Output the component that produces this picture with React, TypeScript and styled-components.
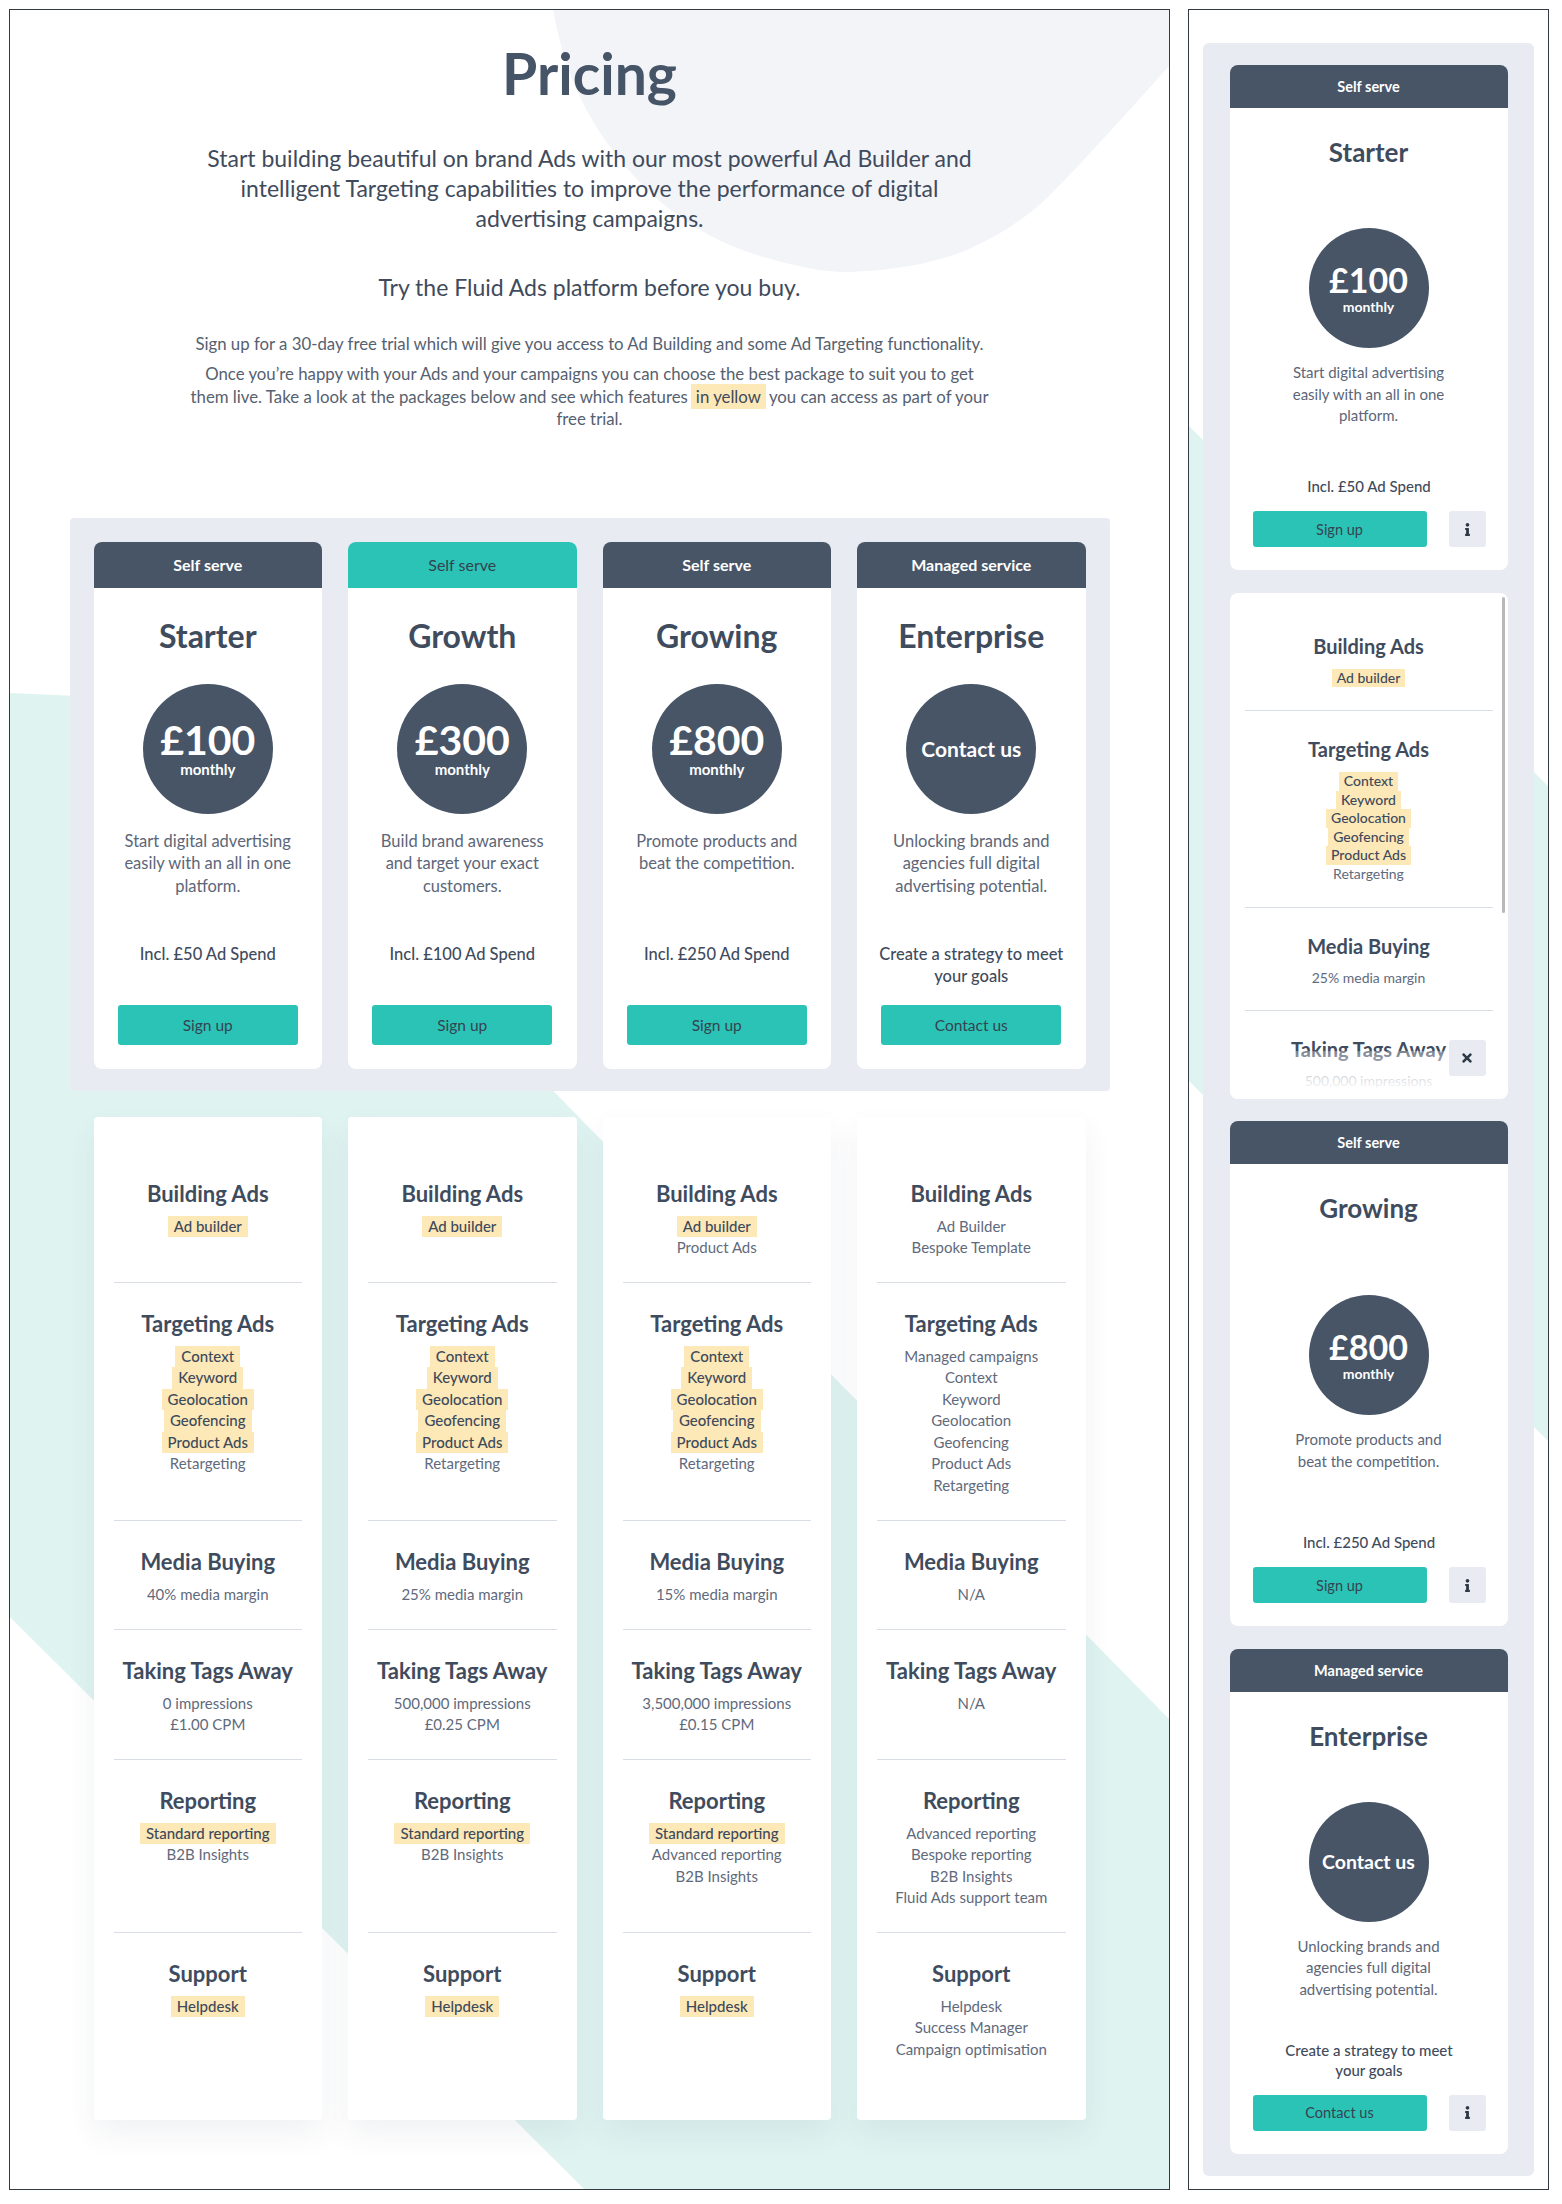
import React from 'react';
import styled, { createGlobalStyle } from 'styled-components';
import { FaInfo, FaTimes } from 'react-icons/fa';

const C = {
  slate: '#475567',
  ink: '#3f4c5e',
  text: '#56616f',
  soft: '#5f6a7c',
  teal: '#2cc3b7',
  panel: '#e8ebf2',
  mint: '#dff4f1',
  blob: '#f3f4f8',
  mark: '#fde8b7',
  rule: '#d9dde8',
};

const GlobalStyle = createGlobalStyle`
  html, body { margin: 0; padding: 0; background: #fff; }
  body { font-family: Lato, "Liberation Sans", Arial, sans-serif; color: ${C.slate}; }
  *, *::before, *::after { box-sizing: border-box; }
`;

const Page = styled.div`
  display: flex;
  align-items: flex-start;
  gap: 18px;
  padding: 9px 0 0 9px;
  width: 1562px;
  height: 2204px;
  overflow: hidden;
`;

const Frame = styled.section<{ $w: number }>`
  position: relative;
  flex: none;
  width: ${(p) => p.$w}px;
  height: 2181px;
  border: 1px solid #343a44;
  overflow: hidden;
  background: #fff;
`;

const Backdrop = styled.svg`
  position: absolute;
  inset: 0;
  width: 100%;
  height: 100%;
  z-index: 0;
`;

const Content = styled.div`
  position: relative;
  z-index: 1;
  display: flex;
  flex-direction: column;
  align-items: center;
`;

const DesktopContent = styled(Content)`
  padding-top: 31px;
`;

const PageTitle = styled.h1`
  margin: 0;
  font-size: 57px;
  line-height: 65px;
  font-weight: 700;
  color: #465467;
`;

const Lead = styled.p<{ $gap: number }>`
  margin: ${(p) => p.$gap}px 0 0;
  font-size: 23px;
  line-height: 30px;
  text-align: center;
  color: #3f4b5c;
`;

const Note = styled.p<{ $gap: number }>`
  margin: ${(p) => p.$gap}px 0 0;
  font-size: 16.8px;
  line-height: 22.5px;
  text-align: center;
  color: ${C.text};
`;

const Yellow = styled.span`
  background: ${C.mark};
  padding: 2px 5px;
  margin: 0 3px;
  color: #3e4a5b;
`;

const PlanGrid = styled.div`
  width: 1040px;
  margin-top: 87px;
  padding: 24px 24px 22px;
  background: ${C.panel};
  border-radius: 4px;
  display: grid;
  grid-template-columns: repeat(4, 1fr);
  column-gap: 26px;
`;

const PlanCard = styled.article<{ $m?: boolean }>`
  background: #fff;
  border-radius: 8px;
  overflow: hidden;
  display: flex;
  flex-direction: column;
  align-items: center;
  ${(p) => (p.$m ? 'width: 278px; height: 505px;' : 'padding-bottom: 24px;')}
`;

const PlanTag = styled.div<{ $accent?: boolean; $m?: boolean }>`
  width: 100%;
  height: ${(p) => (p.$m ? 43 : 46)}px;
  display: flex;
  align-items: center;
  justify-content: center;
  font-size: ${(p) => (p.$m ? 14.5 : 16)}px;
  font-weight: ${(p) => (p.$accent ? 400 : 700)};
  background: ${(p) => (p.$accent ? C.teal : C.slate)};
  color: ${(p) => (p.$accent ? '#33424f' : '#fff')};
`;

const PlanName = styled.h2<{ $m?: boolean }>`
  margin: ${(p) => (p.$m ? 28 : 29)}px 0 0;
  font-size: ${(p) => (p.$m ? 26 : 32)}px;
  line-height: ${(p) => (p.$m ? 32 : 38)}px;
  font-weight: 700;
  color: ${C.ink};
`;

const PriceCircle = styled.div<{ $m?: boolean }>`
  flex: none;
  width: ${(p) => (p.$m ? 120 : 130)}px;
  height: ${(p) => (p.$m ? 120 : 130)}px;
  margin-top: ${(p) => (p.$m ? 0 : 29)}px;
  border-radius: 50%;
  background: ${C.slate};
  color: #fff;
  display: flex;
  flex-direction: column;
  align-items: center;
  justify-content: center;
`;

const PriceValue = styled.div<{ $m?: boolean }>`
  font-size: ${(p) => (p.$m ? 34 : 41)}px;
  line-height: ${(p) => (p.$m ? 36 : 42)}px;
  font-weight: 700;
`;

const PriceUnit = styled.div<{ $m?: boolean }>`
  font-size: ${(p) => (p.$m ? 14 : 15)}px;
  line-height: 17px;
  font-weight: 700;
`;

const PriceContact = styled.div<{ $m?: boolean }>`
  font-size: ${(p) => (p.$m ? 19.5 : 21)}px;
  font-weight: 700;
`;

const PlanDesc = styled.p<{ $m?: boolean }>`
  margin: ${(p) => (p.$m ? 14 : 16)}px 0 0;
  max-width: ${(p) => (p.$m ? 175 : 190)}px;
  ${(p) => (p.$m ? '' : 'height: 113px;')}
  font-size: ${(p) => (p.$m ? 15 : 16.5)}px;
  line-height: ${(p) => (p.$m ? 21.5 : 22.5)}px;
  text-align: center;
  color: #5c6678;
`;

const PlanIncl = styled.p<{ $m?: boolean }>`
  margin: 0 0 ${(p) => (p.$m ? 15 : 0)}px;
  max-width: ${(p) => (p.$m ? 195 : 190)}px;
  ${(p) => (p.$m ? '' : 'height: 62px;')}
  font-size: ${(p) => (p.$m ? 15 : 16.5)}px;
  line-height: ${(p) => (p.$m ? 20 : 22)}px;
  font-weight: 500;
  text-align: center;
  color: #3f4b5c;
`;

const PrimaryButton = styled.button<{ $m?: boolean }>`
  ${(p) => (p.$m ? 'flex: 1;' : 'width: 180px;')}
  height: ${(p) => (p.$m ? 36 : 40)}px;
  border: none;
  border-radius: 3px;
  background: ${C.teal};
  color: #34434f;
  font-family: inherit;
  font-size: ${(p) => (p.$m ? 14.5 : 15.5)}px;
  cursor: pointer;
`;

const PlanMiddle = styled.div`
  flex: 1;
  display: flex;
  flex-direction: column;
  align-items: center;
  justify-content: center;
  padding-top: 11px;
`;

const PlanFoot = styled.div`
  width: 100%;
  display: flex;
  flex-direction: column;
  align-items: center;
  padding: 0 22px 23px 23px;
`;

const ActionRow = styled.div`
  width: 100%;
  display: flex;
  gap: 22px;
`;

const IconButton = styled.button`
  flex: none;
  width: 37px;
  height: 36px;
  border: none;
  border-radius: 3px;
  background: ${C.panel};
  color: #2f3a48;
  display: flex;
  align-items: center;
  justify-content: center;
  padding: 0;
`;

const FeatureGrid = styled.div`
  width: 1040px;
  margin-top: 26px;
  padding: 0 24px;
  display: grid;
  grid-template-columns: repeat(4, 1fr);
  column-gap: 26px;
`;

const FeatureCard = styled.div<{ $m?: boolean }>`
  position: relative;
  background: #fff;
  border-radius: ${(p) => (p.$m ? 8 : 4)}px;
  box-shadow: ${(p) => (p.$m ? 'none' : '0 14px 30px rgba(60, 72, 95, 0.07)')};
  ${(p) => (p.$m ? 'width: 278px; height: 506px; overflow: hidden;' : '')}
`;

const FeatureSection = styled.div<{ $h?: number; $first?: boolean; $m?: boolean }>`
  margin: 0 ${(p) => (p.$m ? 15 : 20)}px;
  ${(p) => (p.$h ? `height: ${p.$h}px;` : '')}
  padding-top: ${(p) => (p.$first ? (p.$m ? 42 : 64) : p.$m ? 27 : 28)}px;
  padding-bottom: ${(p) => (p.$m ? 23 : 0)}px;
  border-top: ${(p) => (p.$first ? 'none' : `1px solid ${C.rule}`)};
  text-align: center;
`;

const FeatureTitle = styled.h3<{ $m?: boolean }>`
  margin: 0 0 ${(p) => (p.$m ? 12 : 9)}px;
  font-size: ${(p) => (p.$m ? 20 : 22)}px;
  line-height: ${(p) => (p.$m ? 22 : 26)}px;
  font-weight: 700;
  color: ${C.ink};
  white-space: nowrap;
`;

const FeatureItem = styled.div<{ $m?: boolean }>`
  font-size: ${(p) => (p.$m ? 14 : 15)}px;
  line-height: ${(p) => (p.$m ? 18.6 : 21.5)}px;
  white-space: nowrap;
`;

const Mark = styled.span<{ $hl?: boolean; $m?: boolean }>`
  display: inline-block;
  vertical-align: top;
  padding: 0 ${(p) => (p.$m ? 5 : 6)}px;
  background: ${(p) => (p.$hl ? C.mark : 'transparent')};
  color: ${(p) => (p.$hl ? '#3e4a5b' : C.soft)};
  font-weight: ${(p) => (p.$hl ? 500 : 400)};
`;

const Fade = styled.div`
  position: absolute;
  left: 0;
  right: 0;
  bottom: 0;
  height: 48px;
  background: linear-gradient(rgba(255, 255, 255, 0.3), #fff 85%);
`;

const ScrollThumb = styled.div`
  position: absolute;
  top: 4px;
  right: 3px;
  width: 3px;
  height: 316px;
  border-radius: 2px;
  background: #b8b9bc;
`;

const CloseButton = styled(IconButton)`
  position: absolute;
  right: 22px;
  bottom: 23px;
`;

const MobilePanel = styled.div`
  margin: 33px 14px 0;
  padding: 22px 0;
  background: ${C.panel};
  border-radius: 6px;
  display: flex;
  flex-direction: column;
  align-items: center;
  gap: 22.5px;
  align-self: stretch;
`;

type Item = [string, boolean?];
type Section = { title: string; items: Item[] };

type Plan = {
  tag: string;
  accent?: boolean;
  name: string;
  price?: string;
  desc: string;
  incl: string;
  cta: string;
  features: Section[];
};

const targetingSelf: Item[] = [
  ['Context', true],
  ['Keyword', true],
  ['Geolocation', true],
  ['Geofencing', true],
  ['Product Ads', true],
  ['Retargeting'],
];

const plans: Plan[] = [
  {
    tag: 'Self serve',
    name: 'Starter',
    price: '£100',
    desc: 'Start digital advertising easily with an all in one platform.',
    incl: 'Incl. £50 Ad Spend',
    cta: 'Sign up',
    features: [
      { title: 'Building Ads', items: [['Ad builder', true]] },
      { title: 'Targeting Ads', items: targetingSelf },
      { title: 'Media Buying', items: [['40% media margin']] },
      { title: 'Taking Tags Away', items: [['0 impressions'], ['£1.00 CPM']] },
      { title: 'Reporting', items: [['Standard reporting', true], ['B2B Insights']] },
      { title: 'Support', items: [['Helpdesk', true]] },
    ],
  },
  {
    tag: 'Self serve',
    accent: true,
    name: 'Growth',
    price: '£300',
    desc: 'Build brand awareness and target your exact customers.',
    incl: 'Incl. £100 Ad Spend',
    cta: 'Sign up',
    features: [
      { title: 'Building Ads', items: [['Ad builder', true]] },
      { title: 'Targeting Ads', items: targetingSelf },
      { title: 'Media Buying', items: [['25% media margin']] },
      { title: 'Taking Tags Away', items: [['500,000 impressions'], ['£0.25 CPM']] },
      { title: 'Reporting', items: [['Standard reporting', true], ['B2B Insights']] },
      { title: 'Support', items: [['Helpdesk', true]] },
    ],
  },
  {
    tag: 'Self serve',
    name: 'Growing',
    price: '£800',
    desc: 'Promote products and beat the competition.',
    incl: 'Incl. £250 Ad Spend',
    cta: 'Sign up',
    features: [
      { title: 'Building Ads', items: [['Ad builder', true], ['Product Ads']] },
      { title: 'Targeting Ads', items: targetingSelf },
      { title: 'Media Buying', items: [['15% media margin']] },
      { title: 'Taking Tags Away', items: [['3,500,000 impressions'], ['£0.15 CPM']] },
      {
        title: 'Reporting',
        items: [['Standard reporting', true], ['Advanced reporting'], ['B2B Insights']],
      },
      { title: 'Support', items: [['Helpdesk', true]] },
    ],
  },
  {
    tag: 'Managed service',
    name: 'Enterprise',
    desc: 'Unlocking brands and agencies full digital advertising potential.',
    incl: 'Create a strategy to meet your goals',
    cta: 'Contact us',
    features: [
      { title: 'Building Ads', items: [['Ad Builder'], ['Bespoke Template']] },
      {
        title: 'Targeting Ads',
        items: [
          ['Managed campaigns'],
          ['Context'],
          ['Keyword'],
          ['Geolocation'],
          ['Geofencing'],
          ['Product Ads'],
          ['Retargeting'],
        ],
      },
      { title: 'Media Buying', items: [['N/A']] },
      { title: 'Taking Tags Away', items: [['N/A']] },
      {
        title: 'Reporting',
        items: [
          ['Advanced reporting'],
          ['Bespoke reporting'],
          ['B2B Insights'],
          ['Fluid Ads support team'],
        ],
      },
      {
        title: 'Support',
        items: [['Helpdesk'], ['Success Manager'], ['Campaign optimisation']],
      },
    ],
  },
];

const rowHeights = [165, 238, 109, 130, 173, 188];

function Price({ plan, m }: { plan: Plan; m?: boolean }) {
  return (
    <PriceCircle $m={m}>
      {plan.price ? (
        <>
          <PriceValue $m={m}>{plan.price}</PriceValue>
          <PriceUnit $m={m}>monthly</PriceUnit>
        </>
      ) : (
        <PriceContact $m={m}>Contact us</PriceContact>
      )}
    </PriceCircle>
  );
}

function DesktopPlan({ plan }: { plan: Plan }) {
  return (
    <PlanCard>
      <PlanTag $accent={plan.accent}>{plan.tag}</PlanTag>
      <PlanName>{plan.name}</PlanName>
      <Price plan={plan} />
      <PlanDesc>{plan.desc}</PlanDesc>
      <PlanIncl>{plan.incl}</PlanIncl>
      <PrimaryButton>{plan.cta}</PrimaryButton>
    </PlanCard>
  );
}

function MobilePlan({ plan }: { plan: Plan }) {
  return (
    <PlanCard $m>
      <PlanTag $m>{plan.tag}</PlanTag>
      <PlanName $m>{plan.name}</PlanName>
      <PlanMiddle>
        <Price plan={plan} m />
        <PlanDesc $m>{plan.desc}</PlanDesc>
      </PlanMiddle>
      <PlanFoot>
        <PlanIncl $m>{plan.incl}</PlanIncl>
        <ActionRow>
          <PrimaryButton $m>{plan.cta}</PrimaryButton>
          <IconButton aria-label="More info">
            <FaInfo size={13} />
          </IconButton>
        </ActionRow>
      </PlanFoot>
    </PlanCard>
  );
}

function Sections({ sections, m }: { sections: Section[]; m?: boolean }) {
  return (
    <>
      {sections.map((s, i) => (
        <FeatureSection key={s.title} $first={i === 0} $m={m} $h={m ? undefined : rowHeights[i]}>
          <FeatureTitle $m={m}>{s.title}</FeatureTitle>
          {s.items.map(([label, hl]) => (
            <FeatureItem key={label} $m={m}>
              <Mark $hl={hl} $m={m}>
                {label}
              </Mark>
            </FeatureItem>
          ))}
        </FeatureSection>
      ))}
    </>
  );
}

export default function App() {
  return (
    <>
      <GlobalStyle />
      <Page>
        <Frame $w={1161}>
          <Backdrop viewBox="0 0 1159 2179" preserveAspectRatio="none">
            <path
              fill={C.blob}
              d="M543,0 C555,65 575,100 595,130 C630,180 680,225 750,246 C790,258 820,263 840,262 C890,260 925,252 952,242 C990,226 1020,205 1040,185 C1070,155 1120,100 1159,56 L1159,0 Z"
            />
            <polygon fill={C.mint} points="0,683 160,690 1159,1709 1159,2179 574,2179 0,1607" />
          </Backdrop>
          <DesktopContent>
            <PageTitle>Pricing</PageTitle>
            <Lead $gap={37}>
              Start building beautiful on brand Ads with our most powerful Ad Builder and
              <br />
              intelligent Targeting capabilities to improve the performance of digital
              <br />
              advertising campaigns.
            </Lead>
            <Lead $gap={39}>Try the Fluid Ads platform before you buy.</Lead>
            <Note $gap={31}>
              Sign up for a 30-day free trial which will give you access to Ad Building and some Ad
              Targeting functionality.
            </Note>
            <Note $gap={7.5}>
              Once you’re happy with your Ads and your campaigns you can choose the best package to
              suit you to get
              <br />
              them live. Take a look at the packages below and see which features
              <Yellow>in yellow</Yellow>
              you can access as part of your
              <br />
              free trial.
            </Note>
            <PlanGrid>
              {plans.map((p) => (
                <DesktopPlan key={p.name} plan={p} />
              ))}
            </PlanGrid>
            <FeatureGrid>
              {plans.map((p) => (
                <FeatureCard key={p.name}>
                  <Sections sections={p.features} />
                </FeatureCard>
              ))}
            </FeatureGrid>
          </DesktopContent>
        </Frame>
        <Frame $w={361}>
          <Backdrop viewBox="0 0 359 2179" preserveAspectRatio="none">
            <polygon fill={C.mint} points="0,416 359,776 359,1431 0,1071" />
          </Backdrop>
          <Content>
            <MobilePanel>
              <MobilePlan plan={plans[0]} />
              <FeatureCard $m>
                <Sections sections={plans[1].features.slice(0, 4)} m />
                <Fade />
                <ScrollThumb />
                <CloseButton aria-label="Close">
                  <FaTimes size={14} />
                </CloseButton>
              </FeatureCard>
              <MobilePlan plan={plans[2]} />
              <MobilePlan plan={plans[3]} />
            </MobilePanel>
          </Content>
        </Frame>
      </Page>
    </>
  );
}
